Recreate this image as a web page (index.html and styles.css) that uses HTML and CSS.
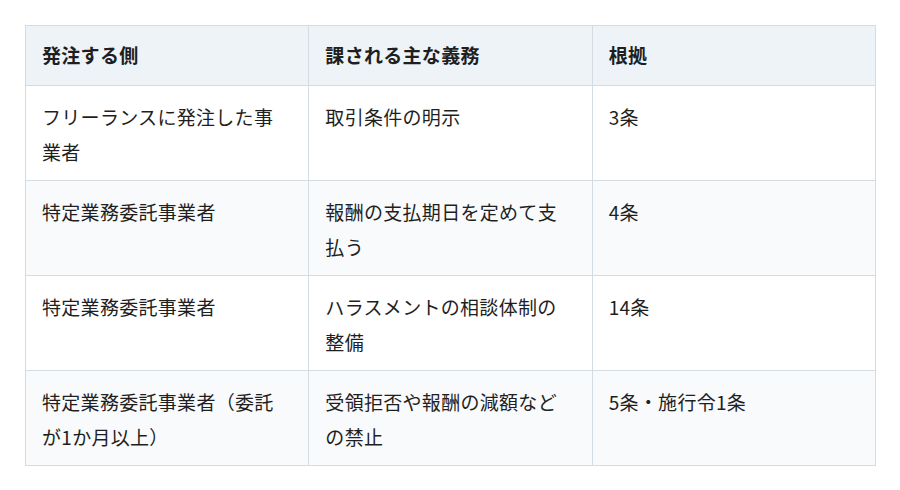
FILE: index.html
```html
<!DOCTYPE html>
<html lang="ja">
<head>
<meta charset="utf-8">
<link rel="stylesheet" href="styles.css">
</head>
<body>
<table class="duty-table">
  <thead>
    <tr><th>発注する側</th><th>課される主な義務</th><th>根拠</th></tr>
  </thead>
  <tbody>
    <tr><td>フリーランスに発注した事業者</td><td>取引条件の明示</td><td>3条</td></tr>
    <tr><td>特定業務委託事業者</td><td>報酬の支払期日を定めて支払う</td><td>4条</td></tr>
    <tr><td>特定業務委託事業者</td><td>ハラスメントの相談体制の整備</td><td>14条</td></tr>
    <tr><td>特定業務委託事業者（委託が1か月以上）</td><td>受領拒否や報酬の減額などの禁止</td><td>5条・施行令1条</td></tr>
  </tbody>
</table>
</body>
</html>
```

FILE: styles.css
```css
html, body {
  margin: 0;
  background: #ffffff;
}
body {
  padding: 25px;
  font-family: "Noto Sans CJK JP", "Noto Sans", sans-serif;
  color: #1f1f1f;
}
.duty-table {
  width: 851px;
  border-collapse: collapse;
  table-layout: fixed;
  font-size: 19px;
  line-height: 35px;
  letter-spacing: 0.3px;
}
.duty-table th,
.duty-table td {
  border: 1px solid #d3dbe3;
  padding: 13px 16px 11px;
  text-align: left;
  vertical-align: top;
}
.duty-table th {
  background: #eef3f8;
  font-weight: 700;
  padding: 11px 16px 13px;
}
.duty-table tbody tr:nth-child(even) td {
  background: #f8fafc;
}
```
